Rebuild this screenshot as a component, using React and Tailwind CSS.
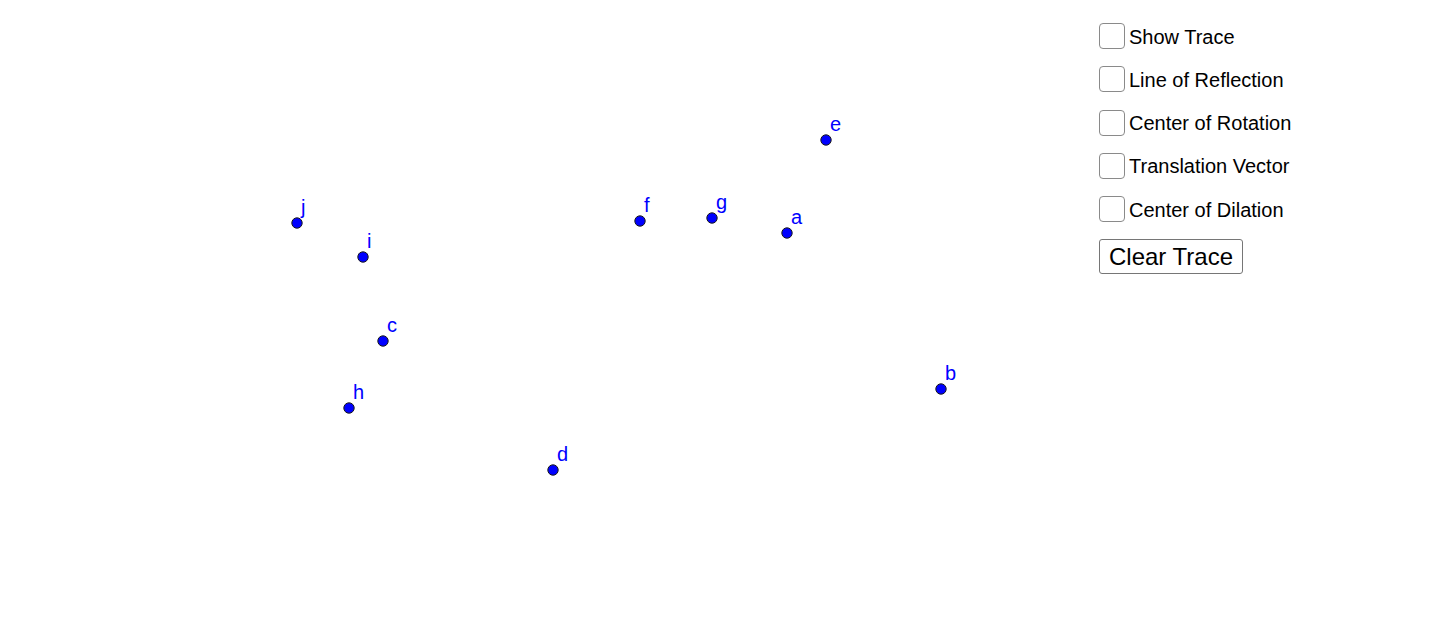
import React from "react";

const points = [
  { n: "j", x: 297, y: 223 },
  { n: "i", x: 363, y: 257 },
  { n: "c", x: 383, y: 341 },
  { n: "h", x: 349, y: 408 },
  { n: "d", x: 553, y: 470 },
  { n: "f", x: 640, y: 221 },
  { n: "g", x: 712, y: 218 },
  { n: "a", x: 787, y: 233 },
  { n: "e", x: 826, y: 140 },
  { n: "b", x: 941, y: 389 },
];

const boxes = [
  "Show Trace",
  "Line of Reflection",
  "Center of Rotation",
  "Translation Vector",
  "Center of Dilation",
];

export default function App() {
  return (
    <div
      className="relative w-[1440px] h-[642px] bg-white overflow-hidden"
      style={{ fontFamily: '"Liberation Sans", Arial, sans-serif' }}
    >
      <svg width="1440" height="642" className="block">
        {points.map((p) => (
          <g key={p.n}>
            <circle cx={p.x} cy={p.y} r="5.2" fill="#0000ff" stroke="#1a1a1a" strokeWidth="1" />
            <text
              x={p.x + 4}
              y={p.y - 9.5}
              fill="#0000ff"
              fontSize="20"
              fontFamily='"Liberation Sans", Arial, sans-serif'
            >
              {p.n}
            </text>
          </g>
        ))}
      </svg>
      <div className="absolute left-[1099px] top-[23px] flex flex-col items-start">
        {boxes.map((b) => (
          <label key={b} className="flex items-center h-[26px] mb-[17.3px] text-[20px] text-black leading-none">
            <span className="w-[26px] h-[26px] rounded-[4px] border border-[#8a8a8a] bg-white mr-[4px] shrink-0" />
            <span className="pt-[1px]">{b}</span>
          </label>
        ))}
        <button className="mt-0 h-[35px] px-[9px] border border-[#767676] rounded-[3px] bg-white text-[24px] text-black leading-none">
          Clear Trace
        </button>
      </div>
    </div>
  );
}
